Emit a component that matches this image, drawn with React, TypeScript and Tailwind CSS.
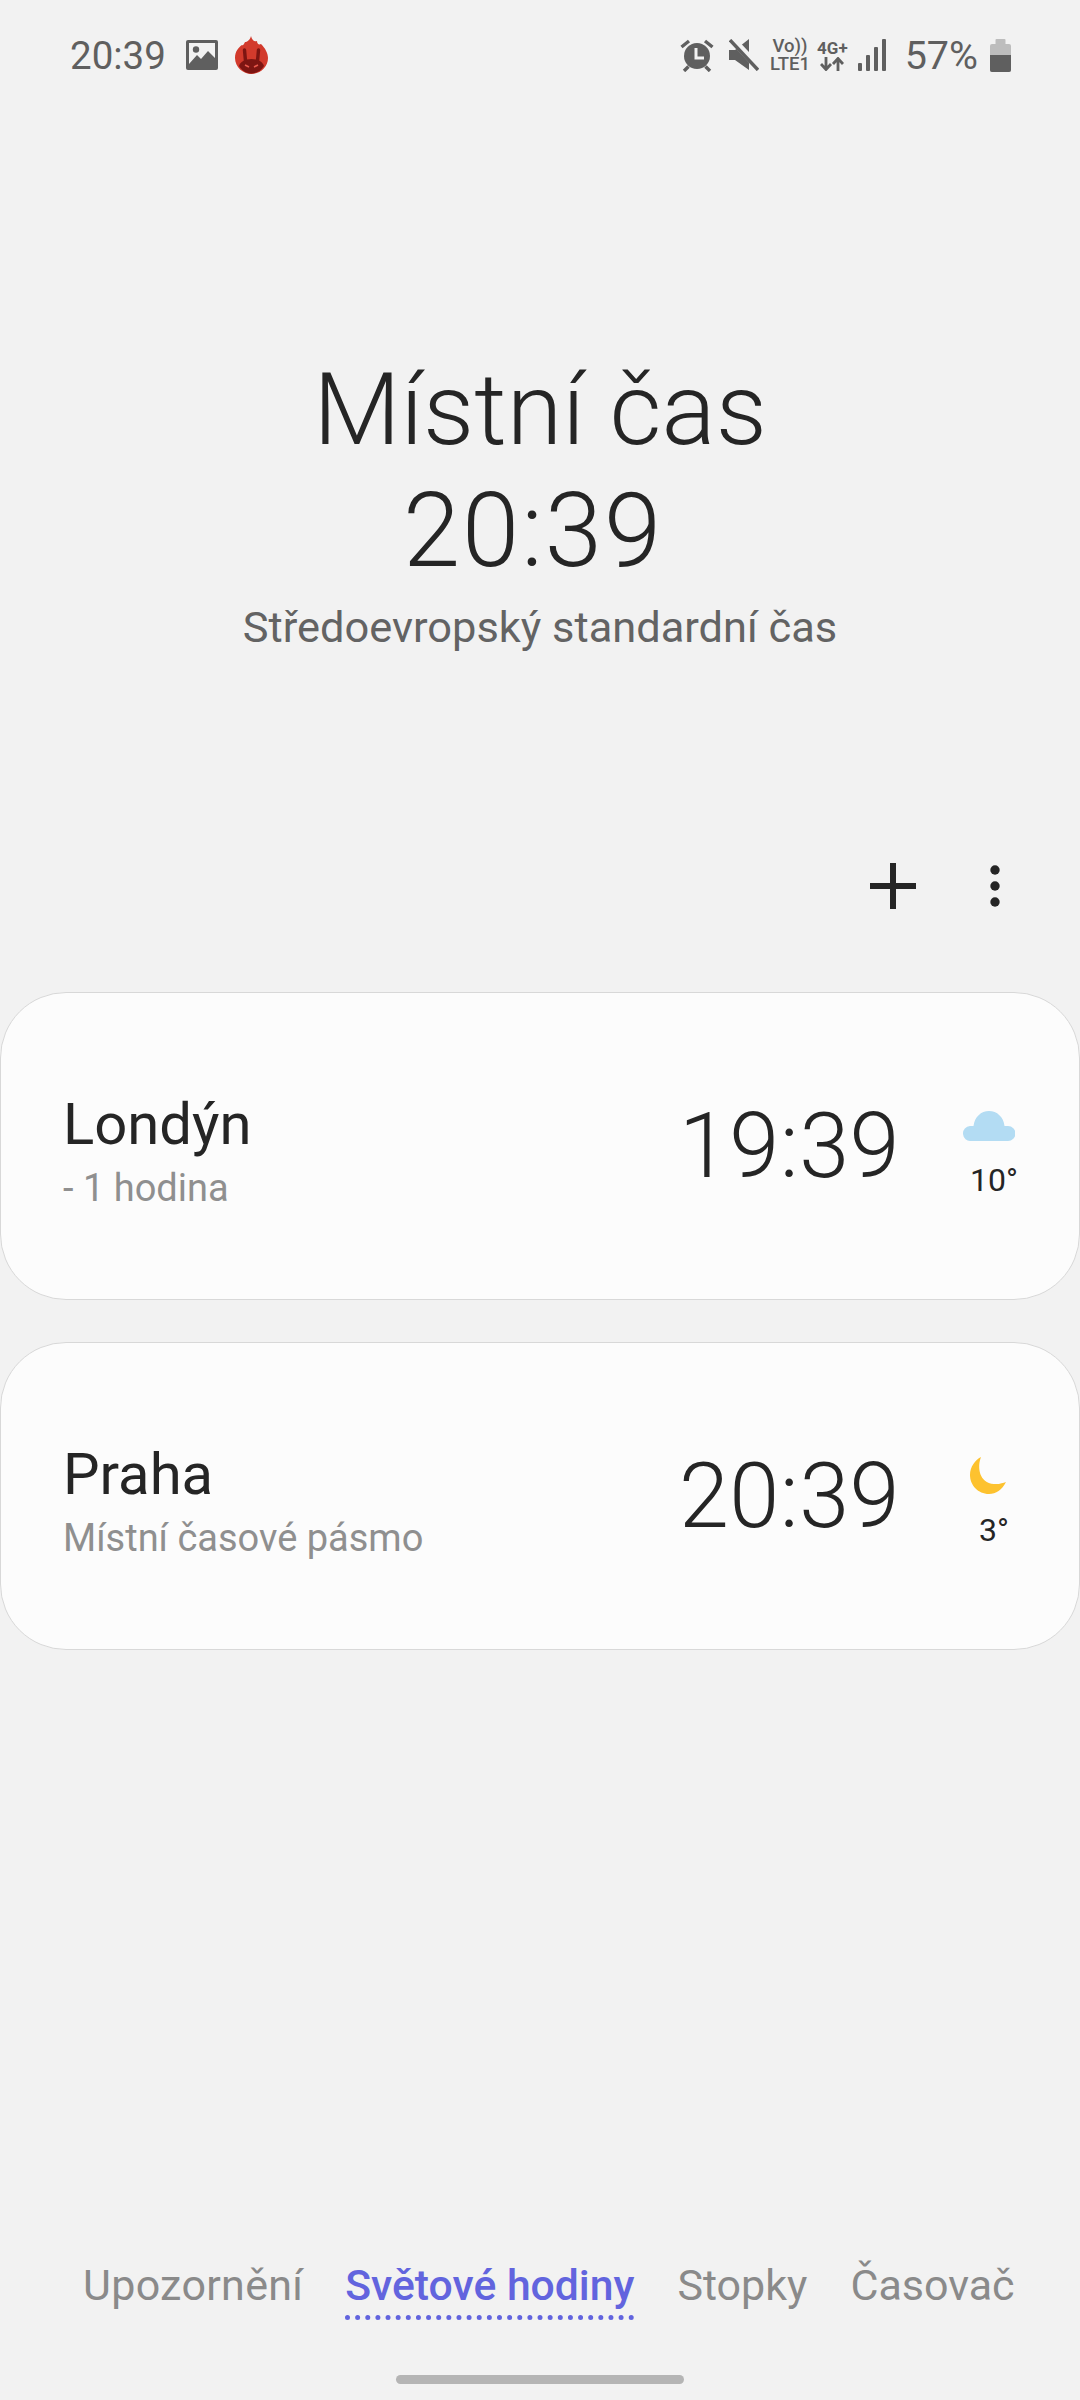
function Alarm() {
  return (
    <svg width="34" height="34" viewBox="0 0 34 34" fill="none">
      <circle cx="17" cy="18" r="13" fill="#5f5f5f" />
      <path d="M1.5 9 L9 3 M32.5 9 L25 3" stroke="#5f5f5f" strokeWidth="3.4" />
      <path d="M4 33 L8.5 28.5 M30 33 L25.5 28.5" stroke="#5f5f5f" strokeWidth="3.4" />
      <path d="M16 10 V20 H24" stroke="#f2f2f2" strokeWidth="3" fill="none" />
    </svg>
  );
}

function Mute() {
  return (
    <svg width="30" height="32" viewBox="0 0 30 32" fill="none">
      <path d="M0 11 H6 L20 0 V31 L6 21 H0 Z" fill="#5f5f5f" />
      <path d="M3 0 L30 29" stroke="#f2f2f2" strokeWidth="7" />
      <path d="M1 1 L29 31" stroke="#5f5f5f" strokeWidth="3.4" />
    </svg>
  );
}

function Signal() {
  return (
    <svg width="28" height="32" viewBox="0 0 28 32" fill="#5f5f5f">
      <rect x="0" y="24" width="4" height="8" rx="1" />
      <rect x="8" y="16" width="4" height="16" rx="1" />
      <rect x="16" y="8" width="4" height="24" rx="1" />
      <rect x="24" y="0" width="4" height="32" rx="1" />
    </svg>
  );
}

function Arrows() {
  return (
    <svg width="24" height="14" viewBox="0 0 24 14" fill="none" stroke="#5f5f5f" strokeWidth="2.8">
      <path d="M6 0 V12 M1 7 L6 12.5 L11 7" />
      <path d="M18 14 V2 M13 7 L18 1.5 L23 7" />
    </svg>
  );
}

function Battery() {
  return (
    <svg width="21" height="33" viewBox="0 0 21 33">
      <rect x="5.5" y="0" width="10" height="6" rx="1" fill="#bdbdbd" />
      <rect x="0" y="5" width="21" height="28" rx="2" fill="#bdbdbd" />
      <path d="M0 16 H21 V31 a2 2 0 0 1 -2 2 H2 a2 2 0 0 1 -2 -2 Z" fill="#5f5f5f" />
    </svg>
  );
}

function Gallery() {
  return (
    <svg width="32" height="30" viewBox="0 0 32 30">
      <rect x="0" y="0" width="32" height="30" rx="2" fill="#5f5f5f" />
      <rect x="3" y="3" width="26" height="24" fill="#f2f2f2" />
      <circle cx="10" cy="9.5" r="3.2" fill="#5f5f5f" />
      <path d="M3 24 L11 15 L15 19 L22 11 L29 18 V27 H3 Z" fill="#5f5f5f" />
    </svg>
  );
}

function Antutu() {
  return (
    <svg width="33" height="38" viewBox="0 0 33 38">
      <path d="M16 0 C17 4 19 6 22 5 C22 8 24 9 26 8 C30 12 33 17 33 22 C33 31 25 38 16.5 38 C8 38 0 31 0 22 C0 15 4 11 7 9 C8 10 9 8 10 6 C12 6 15 4 16 0 Z" fill="#d23a2c" />
      <path d="M16.5 23 C23 23 28 26 29 30 C26 35 21 37.5 16.5 37.5 C12 37.5 7 35 4 30 C5 26 10 23 16.5 23 Z" fill="#7d1512" />
      <path d="M10.5 25 L9.5 14 M22.5 25 L23.5 14" stroke="#7d1512" strokeWidth="3.4" strokeLinecap="round" />
      <path d="M10 29 L14 31 M23 29 L19 31" stroke="#e8594d" strokeWidth="1.6" />
    </svg>
  );
}

function Cloud() {
  return (
    <svg width="52" height="30" viewBox="0 0 52 30">
      <path d="M8 30 a7.5 7.5 0 0 1 -1 -15 h3.5 C11.5 6 18 0 26 0 C34 0 40.5 6 41.5 15 H45 a7.5 7.5 0 0 1 0 15 Z" fill="#b3dcf3" />
    </svg>
  );
}

function Moon() {
  return (
    <svg width="38" height="38" viewBox="0 0 38 38">
      <path d="M11 0 C7 10 9 26 24 27 C29 27.5 33 26 36 25 C32 33 26 37 19 37 C8 37 0 28 0 18 C0 10 5 3 11 0 Z" fill="#fdc22f" />
    </svg>
  );
}

function CityCard({ city, sub, time, temp, icon }: { city: string; sub: string; time: string; temp: string; icon: React.ReactNode }) {
  return (
    <div className="h-[308px] rounded-[66px] border border-[#d8d8d8] bg-[#fcfcfc] flex items-center pl-[62px] pr-[57px]">
      <div className="flex-1 flex flex-col pt-[10px]">
        <div className="text-[58px] leading-[66px] text-[#252525]">{city}</div>
        <div className="text-[38px] leading-[48px] mt-[7px] text-[#8f8f8f]">{sub}</div>
      </div>
      <div className="text-[90px] leading-none font-light text-[#252525] mr-[66px] pt-[2px] tracking-[0.5px]">{time}</div>
      <div className="w-[56px] flex flex-col items-center pt-[14px]">
        <div className="h-[40px] flex items-center justify-center -ml-[10px]">{icon}</div>
        <div className="text-[32px] leading-[40px] mt-[14px] text-[#252525]">{temp}</div>
      </div>
    </div>
  );
}

export default function App() {
  return (
    <div className="w-[1080px] h-[2400px] bg-[#f2f2f2] flex flex-col" style={{ fontFamily: "Roboto, 'Noto Sans', sans-serif" }}>
      <div className="h-[110px] pl-[70px] pr-[69px] flex items-center justify-between text-[#5f5f5f]">
        <div className="flex items-center">
          <span className="text-[38.5px] leading-none pt-[2px]">20:39</span>
          <span className="ml-[20px] flex"><Gallery /></span>
          <span className="ml-[17px] flex"><Antutu /></span>
        </div>
        <div className="flex items-center">
          <Alarm />
          <span className="ml-[15px] flex"><Mute /></span>
          <div className="ml-[11px] flex flex-col items-center font-medium text-[18.5px] leading-[18px] w-[40px]">
            <span>Vo))</span>
            <span>LTE1</span>
          </div>
          <div className="ml-[7px] flex flex-col items-center font-bold text-[17px] leading-[18px]">
            <span>4G+</span>
            <Arrows />
          </div>
          <span className="ml-[10px] flex"><Signal /></span>
          <span className="ml-[19px] text-[39.5px] leading-none pt-[2px]">57%</span>
          <span className="ml-[12px] flex"><Battery /></span>
        </div>
      </div>

      <div className="mt-[240px] flex flex-col items-center">
        <div className="text-[101px] leading-[120px] font-light text-[#252525]">Místní čas</div>
        <div className="text-[103px] leading-[122px] font-light text-[#252525] tracking-[2px] pr-[14px]">20:39</div>
        <div className="text-[43.4px] leading-[50px] mt-[11px] text-[#636363]">Středoevropský standardní čas</div>
      </div>

      <div className="mt-[203px] h-[60px] pr-[80px] flex items-center justify-end">
        <svg width="46" height="46" viewBox="0 0 46 46" fill="#252525">
          <rect x="20" y="0" width="6" height="46" />
          <rect x="0" y="20" width="46" height="6" />
        </svg>
        <svg className="ml-[74px]" width="10" height="42" viewBox="0 0 10 42" fill="#252525">
          <circle cx="5" cy="5" r="4.7" />
          <circle cx="5" cy="21" r="4.7" />
          <circle cx="5" cy="37" r="4.7" />
        </svg>
      </div>

      <div className="mt-[76px] flex flex-col gap-[42px]">
        <CityCard city="Londýn" sub="- 1 hodina" time="19:39" temp="10°" icon={<Cloud />} />
        <CityCard city="Praha" sub="Místní časové pásmo" time="20:39" temp="3°" icon={<Moon />} />
      </div>

      <div className="flex-1" />

      <div className="flex items-start pl-[83px] text-[43px] leading-[52px] text-[#8a8a8a]">
        <span className="tracking-[0.3px]">Upozornění</span>
        <span className="ml-[42px] font-medium text-[42.7px] text-[#6264de] border-b-[5px] border-dotted border-[#6264de] pb-[4px]">Světové hodiny</span>
        <span className="ml-[43px]">Stopky</span>
        <span className="ml-[43px]">Časovač</span>
      </div>

      <div className="mt-[55px] mb-[16px] mx-auto w-[288px] h-[9px] rounded-full bg-[#b5b5b5]" />
    </div>
  );
}
